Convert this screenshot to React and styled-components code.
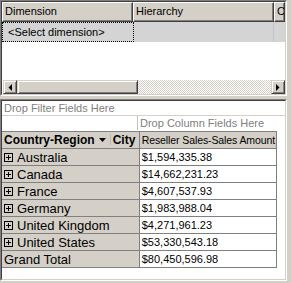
import React from 'react'
import styled, {createGlobalStyle} from 'styled-components'

const GlobalStyle = createGlobalStyle`
  html, body {
    margin: 0;
    padding: 0;
    background: #d4d0c8;
  }
  body {
    width: 291px;
    height: 283px;
    overflow: hidden;
    font-family: "Liberation Sans", Arial, sans-serif;
  }
`

const Screen = styled.div`
  width: 291px;
  height: 283px;
  box-sizing: border-box;
  padding: 0 4px 2px 0;
  display: flex;
  flex-direction: column;
  gap: 3px;
`

const Sunken = styled.div`
  height: ${props => props.h}px;
  box-sizing: border-box;
  border: 1px solid;
  border-color: #808080 #ffffff #ffffff #808080;
`

const SunkenInner = styled.div`
  height: 100%;
  box-sizing: border-box;
  border: 1px solid;
  border-color: #404040 #d4d0c8 #d4d0c8 #404040;
  background: #ffffff;
  display: flex;
  flex-direction: column;
  overflow: hidden;
`

const HeaderRow = styled.div`
  display: flex;
  height: 20px;
  flex-shrink: 0;
`

const HeaderCell = styled.div`
  width: ${props => props.w}px;
  flex-shrink: 0;
  box-sizing: border-box;
  background: #d4d0c8;
  border-top: 1px solid #ffffff;
  border-left: 1px solid #ffffff;
  border-right: 1px solid #404040;
  border-bottom: 1px solid #404040;
  box-shadow: inset -1px -1px 0 #808080;
  font-size: 11px;
  line-height: 17px;
  padding-left: 2px;
  color: #000;
  overflow: hidden;
  white-space: nowrap;
`

const SelectRow = styled.div`
  display: flex;
  height: 20px;
  flex-shrink: 0;
  background: #d4d4d4;
`

const SelectCell = styled.div`
  width: ${props => props.w}px;
  flex-shrink: 0;
  box-sizing: border-box;
  font-size: 11px;
  line-height: 18px;
  padding-left: 5px;
  border: ${props => (props.focused ? '1px dotted #000' : 'none')};
  border-right: ${props => (props.focused ? '1px dotted #000' : '1px solid #c4c4c4')};
  white-space: nowrap;
`

const Filler = styled.div`
  flex: 1;
`

const ScrollBar = styled.div`
  display: flex;
  height: 14px;
  flex-shrink: 0;
  margin-left: 1px;
`

const Raised = styled.div`
  width: ${props => props.w}px;
  flex-shrink: 0;
  box-sizing: border-box;
  background: #d4d0c8;
  border-top: 1px solid #d4d0c8;
  border-left: 1px solid #d4d0c8;
  border-right: 1px solid #404040;
  border-bottom: 1px solid #404040;
  box-shadow: inset 1px 1px 0 #ffffff, inset -1px -1px 0 #808080;
  display: flex;
  align-items: center;
  justify-content: center;
`

const Track = styled.div`
  flex: 1;
  background-image: conic-gradient(#ffffff 25%, #d4d0c8 0 50%, #ffffff 0 75%, #d4d0c8 0);
  background-size: 2px 2px;
`

const PivotArea = styled.div`
  display: flex;
  flex-direction: column;
`

const DropRow = styled.div`
  display: flex;
  height: 15px;
  box-sizing: border-box;
  border-bottom: 1px solid ${props => props.line};
  font-size: 11px;
  line-height: 14px;
  color: #808080;
  white-space: nowrap;
`

const DropCell = styled.div`
  width: ${props => props.w}px;
  flex-shrink: 0;
  box-sizing: border-box;
  padding-left: 2px;
  border-left: ${props => (props.divider ? '1px solid #c0c0c0' : 'none')};
  overflow: hidden;
`

const Table = styled.table`
  border-collapse: collapse;
  table-layout: fixed;
  width: 275px;
`

const RowHead = styled.td`
  width: 134px;
  height: 16px;
  padding: 0 0 0 2px;
  background: #d4d0c8;
  border: 1px solid #808080;
  border-left: none;
  font-size: 13px;
  line-height: 15px;
  white-space: nowrap;
  overflow: hidden;
`

const ValueCell = styled.td`
  height: 16px;
  padding: 0 0 0 2px;
  background: ${props => (props.head ? '#d4d0c8' : '#ffffff')};
  border: 1px solid #808080;
  font-size: ${props => (props.head ? '10.5px' : '11px')};
  letter-spacing: ${props => (props.head ? '-0.1px' : '0')};
  line-height: 15px;
  white-space: nowrap;
  overflow: hidden;
`

const FieldHead = styled.td`
  height: 14px;
  padding: 0 0 0 2px;
  background: #d4d0c8;
  border: 1px solid #808080;
  border-left: none;
  font-size: 12px;
  font-weight: bold;
  line-height: 14px;
  white-space: nowrap;
  overflow: hidden;
`

const FieldButton = styled.span`
  display: inline-flex;
  align-items: center;
  gap: 4px;
`

const FieldSep = styled.span`
  display: inline-block;
  width: 1px;
  height: 11px;
  margin: 0 2px 0 4px;
  background: #b8b8b8;
  vertical-align: -1px;
`

const Label = styled.span`
  display: inline-flex;
  align-items: center;
  gap: 4px;
`

const PlusBox = () => (
    <svg width="9" height="9" viewBox="0 0 9 9">
        <rect x="0.5" y="0.5" width="8" height="8" fill="none" stroke="#000"/>
        <path d="M2 4.5H7M4.5 2V7" stroke="#000" strokeWidth="1"/>
    </svg>
)

const rows = [
    ['Australia', '$1,594,335.38'],
    ['Canada', '$14,662,231.23'],
    ['France', '$4,607,537.93'],
    ['Germany', '$1,983,988.04'],
    ['United Kingdom', '$4,271,961.23'],
    ['United States', '$53,330,543.18'],
]

const App = () => {
    return (
        <>
            <GlobalStyle/>
            <Screen>
                <Sunken h={96}>
                    <SunkenInner>
                        <HeaderRow>
                            <HeaderCell w={131}>Dimension</HeaderCell>
                            <HeaderCell w={141}>Hierarchy</HeaderCell>
                            <HeaderCell w={11}>C</HeaderCell>
                        </HeaderRow>
                        <SelectRow>
                            <SelectCell w={132} focused>&lt;Select dimension&gt;</SelectCell>
                            <SelectCell w={140}/>
                        </SelectRow>
                        <Filler/>
                        <ScrollBar>
                            <Raised w={14}>
                                <svg width="4" height="7" viewBox="0 0 4 7"><path d="M4 0V7L0.5 3.5Z" fill="#000"/></svg>
                            </Raised>
                            <Raised w={121}/>
                            <Track/>
                            <Raised w={14}>
                                <svg width="4" height="7" viewBox="0 0 4 7"><path d="M0 0V7L3.5 3.5Z" fill="#000"/></svg>
                            </Raised>
                        </ScrollBar>
                    </SunkenInner>
                </Sunken>
                <Sunken h={182}>
                    <SunkenInner>
                        <PivotArea>
                            <DropRow line="#d4d0c8">
                                <DropCell w={275}>Drop Filter Fields Here</DropCell>
                            </DropRow>
                            <DropRow line="#ffffff">
                                <DropCell w={135}/>
                                <DropCell w={140} divider>Drop Column Fields Here</DropCell>
                            </DropRow>
                            <Table>
                                <tbody>
                                <tr>
                                    <FieldHead>
                                        <FieldButton>Country-Region
                                            <svg width="7" height="4" viewBox="0 0 7 4"><path d="M0 0H7L3.5 4Z" fill="#000"/></svg>
                                        </FieldButton>
                                        <FieldSep/>City
                                    </FieldHead>
                                    <ValueCell head>Reseller Sales-Sales Amount</ValueCell>
                                </tr>
                                {rows.map(([name, value]) => (
                                    <tr key={name}>
                                        <RowHead>
                                            <Label><PlusBox/>{name}</Label>
                                        </RowHead>
                                        <ValueCell>{value}</ValueCell>
                                    </tr>
                                ))}
                                <tr>
                                    <RowHead>Grand Total</RowHead>
                                    <ValueCell>$80,450,596.98</ValueCell>
                                </tr>
                                </tbody>
                            </Table>
                        </PivotArea>
                    </SunkenInner>
                </Sunken>
            </Screen>
        </>
    )
}

export default App
